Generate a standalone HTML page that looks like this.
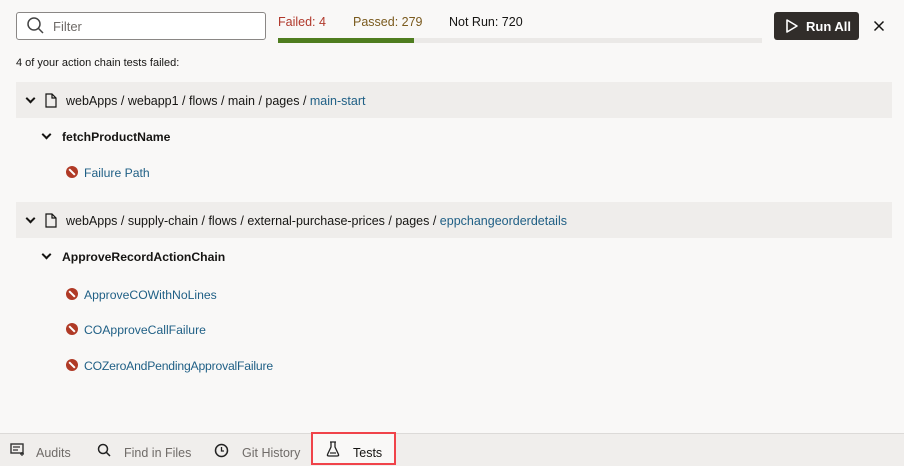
<!DOCTYPE html>
<html><head><meta charset="utf-8"><style>
*{margin:0;padding:0;box-sizing:border-box}
body{width:904px;height:466px;background:#f9f8f7;font-family:"Liberation Sans",sans-serif;color:#161513;position:relative;overflow:hidden;font-size:12.5px}
.a{position:absolute;white-space:nowrap}
.row{position:absolute;left:16px;width:876px;height:36px;background:#efedeb}
.link{color:#1f5f85}
.err{position:absolute;width:12px;height:12px;border-radius:50%;background:#b03a26}
.err:after{content:"";position:absolute;left:2px;top:5px;width:8px;height:2px;background:#fff;transform:rotate(45deg)}
.chev{position:absolute;width:7px;height:7px;border-right:2.2px solid #161513;border-bottom:2.2px solid #161513;transform:rotate(45deg)}
.it{font-size:12.2px}
</style></head><body>
<div class="a" style="left:16px;top:12px;width:250px;height:28px;border:1px solid #8a8785;border-radius:3px;background:#fff"></div>
<svg class="a" style="left:26px;top:16px" width="20" height="20" viewBox="0 0 20 20"><circle cx="8" cy="8" r="6" fill="none" stroke="#444" stroke-width="1.5"/><line x1="12.5" y1="12.5" x2="17" y2="17" stroke="#444" stroke-width="1.5"/></svg>
<div class="a" style="left:53px;top:19px;color:#6f6b68;font-size:13px">Filter</div>
<div class="a" style="left:278px;top:15px;color:#b0382b;font-size:12.5px">Failed: 4</div>
<div class="a" style="left:353px;top:15px;color:#7a5a1e;font-size:12.5px">Passed: 279</div>
<div class="a" style="left:449px;top:15px;color:#161513;font-size:12.5px">Not Run: 720</div>
<div class="a" style="left:278px;top:38px;width:484px;height:5px;background:#ebe9e7"></div>
<div class="a" style="left:278px;top:38px;width:136px;height:5px;background:#4f7d1f"></div>
<div class="a" style="left:774px;top:12px;width:85px;height:28px;background:#312d2a;border-radius:3px"></div>
<svg class="a" style="left:785px;top:18px" width="14" height="16" viewBox="0 0 14 16"><path d="M2 2 L12 8 L2 14 Z" fill="none" stroke="#fff" stroke-width="1.6" stroke-linejoin="round"/></svg>
<div class="a" style="left:806px;top:19px;color:#fff;font-weight:bold;font-size:13px">Run All</div>
<svg class="a" style="left:873px;top:20px" width="12" height="12" viewBox="0 0 12 12"><path d="M1.5 1.5L10.5 10.5M10.5 1.5L1.5 10.5" stroke="#161513" stroke-width="1.5"/></svg>
<div class="a" style="left:16px;top:57px;font-size:11px">4 of your action chain tests failed:</div>

<div class="row" style="top:82px"></div>
<div class="chev" style="left:27px;top:95px"></div>
<svg class="a" style="left:45px;top:93px" width="12" height="15" viewBox="0 0 12 15"><path d="M1 1H7L11 5V14H1Z M7 1V5H11" fill="none" stroke="#161513" stroke-width="1.2"/></svg>
<div class="a" style="left:66px;top:94px">webApps / webapp1 / flows / main / pages / <span class="link">main-start</span></div>
<div class="chev" style="left:43px;top:131px"></div>
<div class="a" style="left:62px;top:130px;font-weight:bold;font-size:12.2px">fetchProductName</div>
<div class="err" style="left:66px;top:166px"></div>
<div class="a link it" style="left:84px;top:166px">Failure Path</div>

<div class="row" style="top:202px"></div>
<div class="chev" style="left:27px;top:215px"></div>
<svg class="a" style="left:45px;top:213px" width="12" height="15" viewBox="0 0 12 15"><path d="M1 1H7L11 5V14H1Z M7 1V5H11" fill="none" stroke="#161513" stroke-width="1.2"/></svg>
<div class="a" style="left:66px;top:214px">webApps / supply-chain / flows / external-purchase-prices / pages / <span class="link">eppchangeorderdetails</span></div>
<div class="chev" style="left:43px;top:251px"></div>
<div class="a" style="left:62px;top:250px;font-weight:bold;font-size:12.2px">ApproveRecordActionChain</div>
<div class="err" style="left:66px;top:288px"></div>
<div class="a link it" style="left:84px;top:288px">ApproveCOWithNoLines</div>
<div class="err" style="left:66px;top:323px"></div>
<div class="a link it" style="left:84px;top:323px">COApproveCallFailure</div>
<div class="err" style="left:66px;top:359px"></div>
<div class="a link it" style="left:84px;top:359px;letter-spacing:-0.2px">COZeroAndPendingApprovalFailure</div>

<div class="a" style="left:0;top:433px;width:904px;height:33px;background:#f0eeec;border-top:1px solid #dcdad8"></div>
<svg class="a" style="left:10px;top:443px" width="16" height="14" viewBox="0 0 16 14"><rect x="1" y="1" width="12" height="9" fill="none" stroke="#333" stroke-width="1.4"/><path d="M3 4H10M3 7H8" stroke="#333" stroke-width="1.2"/><path d="M12 9L12 13M10 11L14 11" stroke="#333" stroke-width="1.2"/></svg>
<div class="a" style="left:36px;top:446px;color:#6f6b68">Audits</div>
<svg class="a" style="left:97px;top:443px" width="14" height="14" viewBox="0 0 14 14"><circle cx="6" cy="6" r="4.5" fill="none" stroke="#222" stroke-width="1.5"/><line x1="9.2" y1="9.2" x2="13" y2="13" stroke="#222" stroke-width="1.5"/></svg>
<div class="a" style="left:124px;top:446px;color:#6f6b68">Find in Files</div>
<svg class="a" style="left:214px;top:443px" width="15" height="15" viewBox="0 0 15 15"><circle cx="7.5" cy="7.5" r="6" fill="none" stroke="#222" stroke-width="1.5"/><path d="M7.5 4V8H10" fill="none" stroke="#222" stroke-width="1.3"/></svg>
<div class="a" style="left:242px;top:446px;color:#6f6b68">Git History</div>
<div class="a" style="left:311px;top:432px;width:85px;height:33px;border:2px solid #f0434a;background:#f9f8f7"></div>
<svg class="a" style="left:326px;top:441px" width="14" height="16" viewBox="0 0 14 16"><path d="M4 1H10M5 1V6L1.5 13.5Q1 15 3 15H11Q13 15 12.5 13.5L9 6V1" fill="none" stroke="#222" stroke-width="1.3"/><path d="M4 12H10" stroke="#222" stroke-width="1.2"/></svg>
<div class="a" style="left:353px;top:446px;color:#161513">Tests</div>
</body></html>
